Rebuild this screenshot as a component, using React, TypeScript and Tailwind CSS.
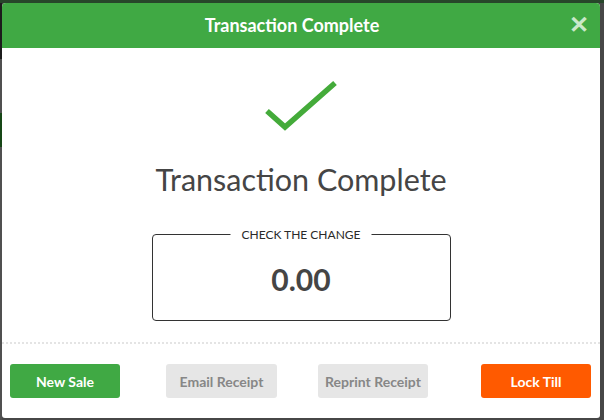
import React from "react";

function Check() {
  return (
    <svg width="76" height="52" viewBox="0 0 76 52" className="block">
      <polyline
        points="4,31 22,47 72,3"
        fill="none"
        stroke="#44ab3a"
        strokeWidth="5.5"
      />
    </svg>
  );
}

export default function App() {
  return (
    <div
      className="w-[604px] h-[420px] bg-[#474747] flex flex-col overflow-hidden"
      style={{ fontFamily: "Lato, 'Open Sans', sans-serif" }}
    >
      <div className="h-[3px] bg-[#27462a]" />
      <div className="flex flex-1">
        <div className="w-[2px] flex flex-col bg-[#505050]">
          <div className="h-[56px] bg-[#1c1c1c]" />
          <div className="h-[54px]" />
          <div className="h-[34px] bg-[#174717]" />
        </div>
        <div className="w-[598px] h-[415px] bg-white rounded-t-[4px] rounded-b-[3px] flex flex-col overflow-hidden">
          <div className="h-[45px] bg-[#40a944] flex items-center justify-center relative pr-[18px]">
            <span className="text-white text-[18px] font-bold">Transaction Complete</span>
            <span className="absolute right-[11px] top-[9px] text-[#c9e8c9] text-[24px] font-bold leading-none">
              ✕
            </span>
          </div>
          <div className="flex flex-col items-center pt-[32px]">
            <Check />
            <div className="mt-[29px] text-[30.5px] text-[#454545] leading-[36px]">Transaction Complete</div>
            <div className="mt-[37px] w-[299px] h-[87px] border border-[#333] rounded-[4px] relative flex items-center justify-center">
              <span className="absolute top-[-7px] left-1/2 -translate-x-1/2 bg-white px-[11px] text-[12px] leading-[14px] text-[#2a2a2a] whitespace-nowrap">
                CHECK THE CHANGE
              </span>
              <span className="text-[30px] font-bold text-[#454545] mt-[4px]">0.00</span>
            </div>
          </div>
          <div className="mt-[21px] border-t-2 border-dotted border-[#e4e4e4]" />
          <div className="flex items-center pl-[8px] pt-[20px]">
            <button className="w-[110px] h-[34px] rounded-[3px] bg-[#40a944] text-white text-[14px] font-bold">
              New Sale
            </button>
            <button className="w-[111px] h-[34px] rounded-[3px] bg-[#e6e6e6] text-[#878787] text-[14px] font-bold ml-[46px]">
              Email Receipt
            </button>
            <button className="w-[110px] h-[34px] rounded-[3px] bg-[#e6e6e6] text-[#878787] text-[14px] font-bold ml-[41px]">
              Reprint Receipt
            </button>
            <button className="w-[110px] h-[34px] rounded-[3px] bg-[#ff5a00] text-white text-[14px] font-bold ml-[53px]">
              Lock Till
            </button>
          </div>
        </div>
      </div>
    </div>
  );
}
